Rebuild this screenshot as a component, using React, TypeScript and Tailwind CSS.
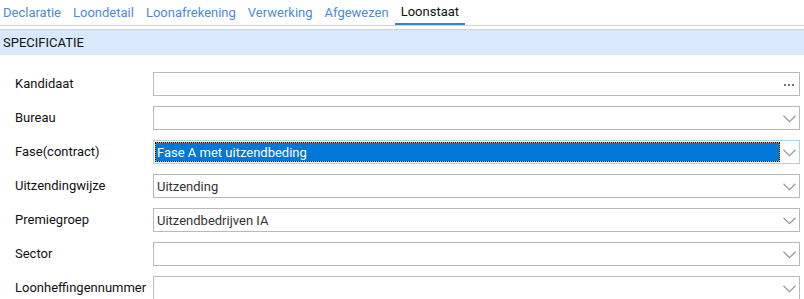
import React from "react";

type Row = {
  label: string;
  value: string;
  kind: "lookup" | "select" | "focused";
};

const TABS = ["Declaratie", "Loondetail", "Loonafrekening", "Verwerking", "Afgewezen", "Loonstaat"];
const ACTIVE_TAB = "Loonstaat";

const ROWS: Row[] = [
  { label: "Kandidaat", value: "", kind: "lookup" },
  { label: "Bureau", value: "", kind: "select" },
  { label: "Fase(contract)", value: "Fase A met uitzendbeding", kind: "focused" },
  { label: "Uitzendingwijze", value: "Uitzending", kind: "select" },
  { label: "Premiegroep", value: "Uitzendbedrijven IA", kind: "select" },
  { label: "Sector", value: "", kind: "select" },
  { label: "Loonheffingennummer", value: "", kind: "select" },
];

function Chevron() {
  return (
    <svg width="13" height="8" viewBox="0 0 13 8" className="shrink-0">
      <polyline points="0.5,0.8 6.5,6.6 12.5,0.8" fill="none" stroke="#9a9a9a" strokeWidth="1.3" />
    </svg>
  );
}

function Dots() {
  return (
    <div className="flex gap-[2px] shrink-0">
      <span className="h-[2px] w-[2px] bg-[#777]" />
      <span className="h-[2px] w-[2px] bg-[#777]" />
      <span className="h-[2px] w-[2px] bg-[#777]" />
    </div>
  );
}

function Field({ row }: { row: Row }) {
  if (row.kind === "focused") {
    return (
      <div className="flex h-[24px] border border-[#a9d0f5] p-[1px]">
        <div className="flex-1 border border-dotted border-black bg-[#e8a040]">
          <div className="flex h-full items-center bg-[#0078d7] pl-[1px] leading-none text-white">{row.value}</div>
        </div>
        <div className="flex w-[18px] items-center justify-center pt-[1px]">
          <Chevron />
        </div>
      </div>
    );
  }
  return (
    <div className="flex h-[24px] items-center border border-[#b9b9b9] pl-[3px] pr-[2px] text-[#333]">
      <span className="flex-1 leading-none">{row.value}</span>
      <div className="flex w-[16px] items-center justify-center pt-[1px]">
        {row.kind === "lookup" ? <Dots /> : <Chevron />}
      </div>
    </div>
  );
}

export default function App() {
  return (
    <div className="h-[299px] w-[804px] overflow-hidden bg-white font-['Roboto',sans-serif] text-[13px] text-[#111]">
      <div className="flex h-[26px] border-b border-[#d2d2d2]">
        <div className="-ml-[3px] flex">
          {TABS.map((tab) => (
            <div
              key={tab}
              className={
                tab === ACTIVE_TAB
                  ? "flex h-[25px] items-center border-b-2 border-[#3b7fc6] px-[6px] text-[#111]"
                  : "flex h-[25px] items-center px-[6px] text-[#4d8bd6]"
              }
            >
              {tab}
            </div>
          ))}
        </div>
      </div>

      <div className="mt-[3px] flex h-[26px] items-center border-t border-[#c4d4e4] bg-[#d9e9fb] pl-[3px]">
        SPECIFICATIE
      </div>

      <div className="flex flex-col gap-[10px] pr-[4px] pt-[17px]">
        {ROWS.map((row) => (
          <div key={row.label} className="grid grid-cols-[153px_1fr] items-center">
            <span className="pl-[15px]">{row.label}</span>
            <Field row={row} />
          </div>
        ))}
      </div>
    </div>
  );
}
